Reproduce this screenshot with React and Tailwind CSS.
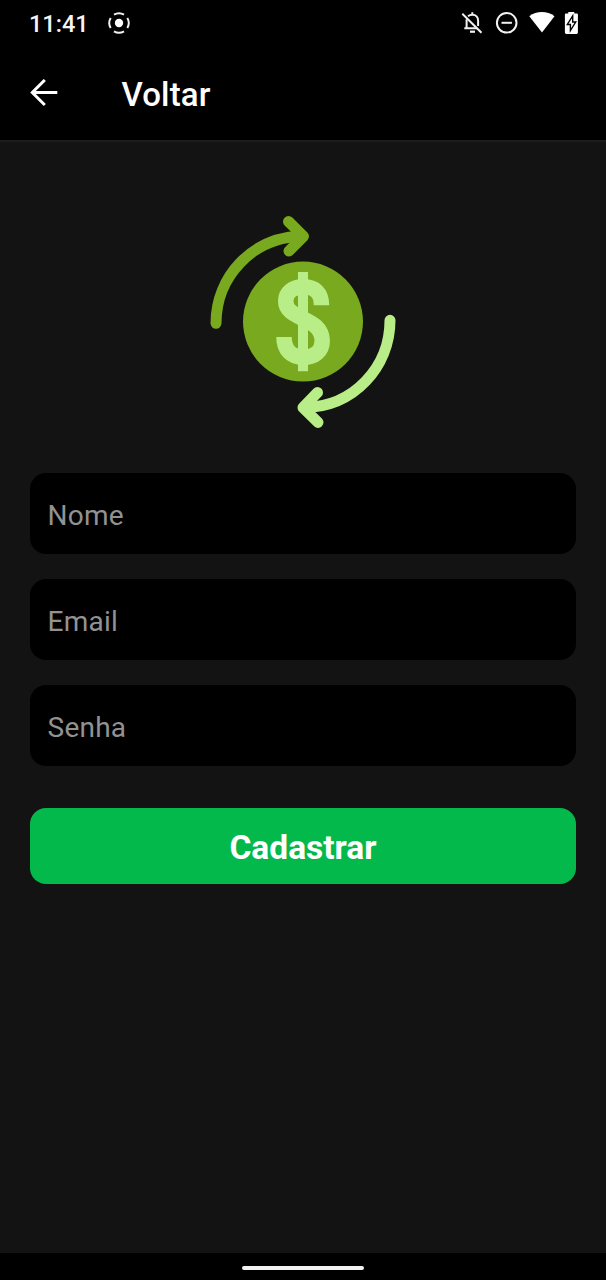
function RecordIcon() {
  return (
    <svg className="ml-[19px] size-6" viewBox="0 0 24 24" fill="none" stroke="#f2f2f2" strokeWidth="2">
      <circle cx="12" cy="12" r="4.2" fill="#fff" stroke="none" />
      <path d="M7 3.7a9.700 9.700 0 0 1 10 0M20.300 7a9.700 9.700 0 0 1 0 10M17 20.300a9.700 9.700 0 0 1-10 0M3.700 17a9.700 9.700 0 0 1 0-10" />
    </svg>
  );
}

function StatusIcons() {
  return (
    <svg className="h-6 w-[118px]" viewBox="461 11 118 24" fill="none" stroke="#f2f2f2" strokeWidth="2">
      <path d="M462.3 13.7 481.5 32.7" />
      <path d="M468 16.2c1.2-.9 2.6-1.4 4.3-1.4 3.7 0 5.8 2.6 5.8 6v5.3M472.3 12.2v3M466.6 19.2v8.6M464.3 28.3h13" />
      <path d="M470 31.7h5" strokeWidth="2.2" />
      <circle cx="506.7" cy="22.8" r="9.8" />
      <path d="M501.5 22.8h10.4" />
      <path d="M529.3 16.2c7.2-5.6 18-5.6 25.2 0L542 32.6z" fill="#fff" stroke="none" />
      <path d="M565.900 13.600h2.400V12h6v1.600h2.700q.9 0 .9.9v18q0 1.400-1.400 1.400h-10.200q-1.400 0-1.400-1.400v-18q0-.9 1-.9z" fill="#fff" stroke="none" />
      <path d="M572.700 15.900 567.300 24.500h3.100v6l5.300-8.500h-3z" fill="#fff" stroke="#000" strokeWidth="1.400" />
    </svg>
  );
}

function Logo() {
  return (
    <svg className="h-[235px] w-[206px]" viewBox="200 205 206 235" fill="none" strokeLinecap="round" strokeLinejoin="round" strokeWidth="11">
      <g stroke="#78a91e">
        <path d="M216 323.300C216 277 252 237.500 301 236.200" />
        <path d="M288.500 221.500 303.500 236.300 289 251" />
      </g>
      <circle cx="303" cy="321.600" r="60" fill="#78a91e" />
      <g stroke="#b9ed87" strokeLinecap="butt">
        <path d="M321.500 305.200C321.500 292.500 314.500 286.700 303.500 286.700C292.500 286.700 285.700 292.500 285.700 301C285.700 321 322.200 316 322.200 341C322.200 351.500 314.500 357.300 303.500 357.300C290.500 357.300 284 349.500 284 337" strokeWidth="15.500" />
        <path d="M303 272v99.300" strokeWidth="10" />
      </g>
      <g stroke="#b9ed87">
        <path d="M390 320.300C390 367 354 406.500 305 407.600" />
        <path d="M317.500 392.500 303 407.600 318 422.400" />
      </g>
    </svg>
  );
}

function Field({ label, type }) {
  return (
    <input
      type={type}
      placeholder={label}
      aria-label={label}
      className="block h-[81px] w-full rounded-[16px] bg-black px-[17.500px] pt-[3px] text-[28px] tracking-[0.250px] text-white outline-none placeholder:text-[#929292] placeholder:opacity-100"
    />
  );
}

export default function App() {
  return (
    <div className="flex h-[1280px] w-[606px] flex-col overflow-hidden bg-[#131313] font-['Roboto',sans-serif] text-white">
      <header className="h-[140px] shrink-0 bg-black">
        <div className="flex h-[46px] items-center pr-[27px] pl-[29px]">
          <span className="w-[59px] pt-[3px] text-[23.500px] font-medium whitespace-nowrap text-[#f5f5f5]">11:41</span>
          <RecordIcon />
          <span className="flex-1" />
          <StatusIcons />
        </div>
        <div className="flex h-[94px] items-center pl-[30px]">
          <button aria-label="Voltar" className="size-7">
            <svg className="size-7" viewBox="0 0 28 28" fill="none" stroke="#fff" strokeWidth="3">
              <path d="M27.300 13.500H3M14.800 1 2.300 13.500l12.500 12.500" />
            </svg>
          </button>
          <h1 className="ml-[63.500px] pt-[3px] text-[33px] font-medium tracking-[0.150px]">Voltar</h1>
        </div>
      </header>
      <main className="flex flex-1 flex-col items-center border-t-2 border-[#1c1c1c] px-[30px] pt-[63px]">
        <Logo />
        <form className="mt-[33px] flex w-full flex-col gap-[25px]">
          <Field label="Nome" type="text" />
          <Field label="Email" type="email" />
          <Field label="Senha" type="password" />
          <button type="button" className="mt-[17px] h-[76px] w-full rounded-[16px] bg-[#04b94b] pt-[5px] text-[33.500px] font-bold">
            Cadastrar
          </button>
        </form>
      </main>
      <footer className="flex h-[27px] shrink-0 justify-center bg-black pt-[13px]">
        <div className="h-1 w-[122px] rounded-full bg-[#f2f2f2]" />
      </footer>
    </div>
  );
}
